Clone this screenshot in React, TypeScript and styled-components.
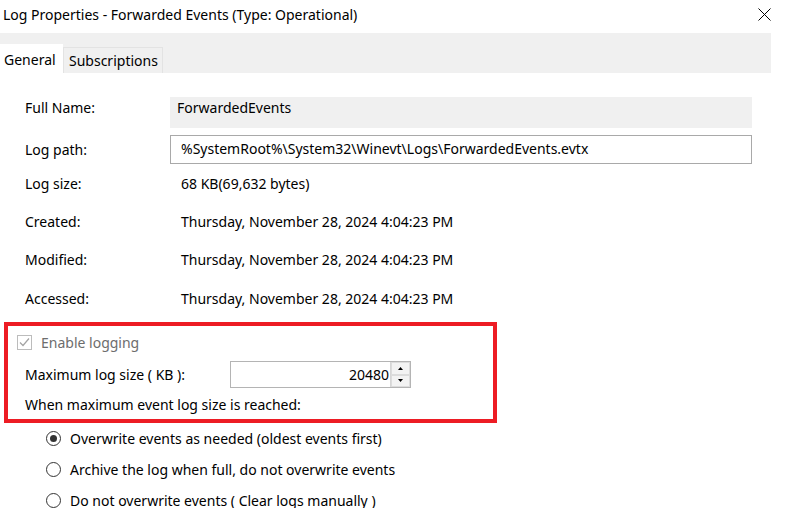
import styled, { createGlobalStyle } from "styled-components";

const GlobalStyle = createGlobalStyle`
  html, body {
    margin: 0;
    padding: 0;
    background: #ffffff;
  }
  body {
    font-family: "Noto Sans", "Segoe UI", sans-serif;
    font-size: 14px;
    color: #000000;
  }
`;

const infoRows = [
  { label: "Log size:", value: "68 KB(69,632 bytes)" },
  { label: "Created:", value: "Thursday, November 28, 2024 4:04:23 PM" },
  { label: "Modified:", value: "Thursday, November 28, 2024 4:04:23 PM" },
  { label: "Accessed:", value: "Thursday, November 28, 2024 4:04:23 PM" },
];

const radioOptions = [
  { label: "Overwrite events as needed (oldest events first)", checked: true },
  { label: "Archive the log when full, do not overwrite events", checked: false },
  { label: "Do not overwrite events ( Clear logs manually )", checked: false },
];

const App = (): JSX.Element => {
  return (
    <Window>
      <GlobalStyle />
      <TitleBar>
        <span>Log Properties - Forwarded Events (Type: Operational)</span>
        <CloseButton>
          <svg width="13" height="13" viewBox="0 0 13 13">
            <path d="M0.5 0.5 L12.5 12.5 M12.5 0.5 L0.5 12.5" stroke="#000" strokeWidth="1" />
          </svg>
        </CloseButton>
      </TitleBar>

      <TabStrip>
        <Tab $active>General</Tab>
        <Tab>Subscriptions</Tab>
      </TabStrip>

      <Page>
        <FieldRow $height={31} $top={24}>
          <TopLabel>Full Name:</TopLabel>
          <ReadOnlyBox>ForwardedEvents</ReadOnlyBox>
        </FieldRow>
        <FieldRow $height={29} $top={7}>
          <Label>Log path:</Label>
          <PathInput>%SystemRoot%\System32\Winevt\Logs\ForwardedEvents.evtx</PathInput>
        </FieldRow>
        <InfoList>
          {infoRows.map((row) => (
            <InfoRow key={row.label}>
              <Label>{row.label}</Label>
              <Value>{row.value}</Value>
            </InfoRow>
          ))}
        </InfoList>
      </Page>

      <Highlight>
        <CheckRow>
          <CheckBox>
            <svg width="13" height="13" viewBox="0 0 13 13">
              <path d="M2 6.5 L5 9.5 L11 2.5" fill="none" stroke="#a3a3a3" strokeWidth="1.2" />
            </svg>
          </CheckBox>
          <DisabledText>Enable logging</DisabledText>
        </CheckRow>
        <SizeRow>
          <SizeLabel>Maximum log size ( KB ):</SizeLabel>
          <SpinBox>
            <SpinValue>20480</SpinValue>
            <SpinButtons>
              <SpinButton>
                <svg width="5" height="3" viewBox="0 0 5 3">
                  <path d="M0 3 L2.5 0 L5 3 Z" fill="#000" />
                </svg>
              </SpinButton>
              <SpinButton>
                <svg width="5" height="3" viewBox="0 0 5 3">
                  <path d="M0 0 L2.5 3 L5 0 Z" fill="#000" />
                </svg>
              </SpinButton>
            </SpinButtons>
          </SpinBox>
        </SizeRow>
        <PlainRow>When maximum event log size is reached:</PlainRow>
      </Highlight>

      <RadioList>
        {radioOptions.map((option) => (
          <RadioRow key={option.label}>
            <Radio $checked={option.checked} />
            <span>{option.label}</span>
          </RadioRow>
        ))}
      </RadioList>
    </Window>
  );
};

const Window = styled.div`
  width: 808px;
  height: 508px;
  overflow: hidden;
  background: #ffffff;
`;

const TitleBar = styled.div`
  height: 29px;
  display: flex;
  align-items: center;
  justify-content: space-between;
  padding: 0 37px 0 3px;
  font-size: 14px;
`;

const CloseButton = styled.div`
  display: flex;
  align-items: center;
  justify-content: center;
`;

const TabStrip = styled.div`
  margin-top: 4px;
  width: 771px;
  height: 40px;
  background: #f0f0f0;
  display: flex;
  align-items: flex-end;
`;

const Tab = styled.div<{ $active?: boolean }>`
  box-sizing: border-box;
  height: ${(p) => (p.$active ? "29px" : "26px")};
  padding: ${(p) => (p.$active ? "0 0 0 3px" : "0 0 0 5px")};
  width: ${(p) => (p.$active ? "63px" : "100px")};
  background: ${(p) => (p.$active ? "#ffffff" : "#f0f0f0")};
  border: 1px solid ${(p) => (p.$active ? "#ffffff" : "#e3e3e3")};
  border-bottom: none;
  display: flex;
  align-items: center;
  font-size: 14px;
`;

const Page = styled.div`
  padding-left: 25px;
  display: flex;
  flex-direction: column;
`;

const FieldRow = styled.div<{ $height: number; $top: number }>`
  display: flex;
  align-items: stretch;
  height: ${(p) => p.$height}px;
  margin-top: ${(p) => p.$top}px;
`;

const Label = styled.div`
  width: 145px;
  flex-shrink: 0;
  display: flex;
  align-items: center;
`;

const TopLabel = styled(Label)`
  align-items: flex-start;
  padding-top: 1px;
`;

const ReadOnlyBox = styled.div`
  width: 582px;
  box-sizing: border-box;
  background: #f0f0f0;
  padding: 1px 7px 0;
  display: flex;
  align-items: flex-start;
`;

const PathInput = styled.div`
  width: 582px;
  box-sizing: border-box;
  border: 1px solid #a9a9a9;
  padding: 0 0 2px 10px;
  display: flex;
  align-items: center;
`;

const InfoList = styled.div`
  margin-top: 0;
  display: flex;
  flex-direction: column;
`;

const InfoRow = styled.div`
  display: flex;
  height: 38.3px;
  align-items: center;
`;

const Value = styled.div`
  padding-left: 11px;
`;

const Highlight = styled.div`
  box-sizing: border-box;
  margin: 5px 0 0 4px;
  width: 493px;
  height: 101px;
  border: 4px solid #ed1c24;
  padding: 0 0 0 9px;
  display: flex;
  flex-direction: column;
`;

const CheckRow = styled.div`
  height: 33px;
  display: flex;
  align-items: center;
  gap: 9px;
`;

const CheckBox = styled.div`
  box-sizing: border-box;
  width: 15px;
  height: 15px;
  border: 1px solid #bcbcbc;
  display: flex;
  align-items: center;
  justify-content: center;
`;

const DisabledText = styled.span`
  color: #6d6d6d;
`;

const SizeRow = styled.div`
  height: 31px;
  display: flex;
  align-items: center;
  padding-left: 8px;
`;

const SizeLabel = styled.div`
  width: 205px;
`;

const SpinBox = styled.div`
  box-sizing: border-box;
  width: 181px;
  height: 27px;
  border: 1px solid #b4b4b4;
  display: flex;
  align-items: stretch;
`;

const SpinValue = styled.div`
  flex: 1;
  display: flex;
  align-items: center;
  justify-content: flex-end;
  padding-right: 1px;
`;

const SpinButtons = styled.div`
  width: 19px;
  display: flex;
  flex-direction: column;
  border-left: 1px solid #d6d6d6;
`;

const SpinButton = styled.div`
  flex: 1;
  display: flex;
  align-items: center;
  justify-content: center;
  background: #f3f3f3;
  border: 1px solid #dcdcdc;
`;

const PlainRow = styled.div`
  height: 29px;
  display: flex;
  align-items: center;
  padding-left: 8px;
`;

const RadioList = styled.div`
  display: flex;
  flex-direction: column;
  padding-left: 46px;
`;

const RadioRow = styled.div`
  height: 31px;
  display: flex;
  align-items: center;
  gap: 9px;
`;

const Radio = styled.div<{ $checked: boolean }>`
  box-sizing: border-box;
  width: 15px;
  height: 15px;
  border-radius: 50%;
  border: 1px solid #333333;
  display: flex;
  align-items: center;
  justify-content: center;

  &::after {
    content: "";
    display: ${(p) => (p.$checked ? "block" : "none")};
    width: 7px;
    height: 7px;
    border-radius: 50%;
    background: #333333;
  }
`;

export default App;
